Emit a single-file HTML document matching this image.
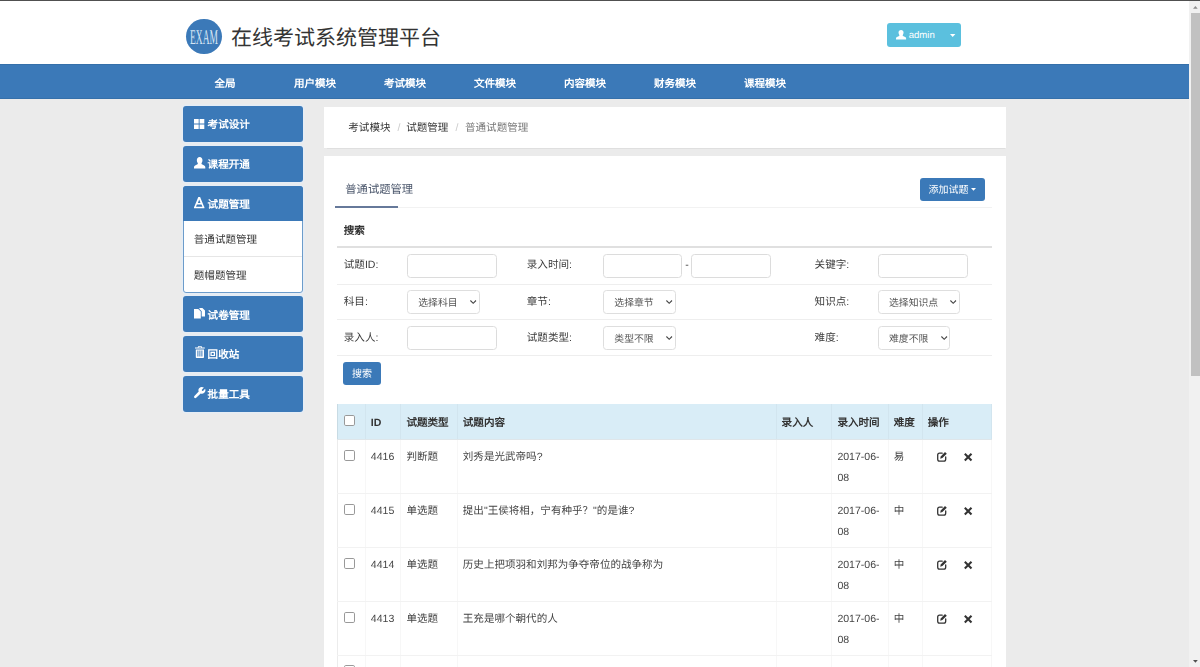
<!DOCTYPE html>
<html lang="zh-CN">
<head>
<meta charset="utf-8">
<title>在线考试系统管理平台</title>
<style>
html,body{margin:0;padding:0}
body{width:1200px;height:667px;overflow:hidden;position:relative;background:#ebebeb;font-family:"Liberation Sans",sans-serif;font-size:10.55px;color:#333;text-rendering:geometricPrecision;filter:blur(.38px)}
.a{position:absolute;white-space:nowrap;box-sizing:border-box}
svg{position:absolute;display:block;overflow:visible}
#hdr{left:-6px;top:-6px;width:1212px;height:70px;background:#fff}
#topline{left:-6px;top:-4px;width:1212px;height:5.3px;background:#505050}
#logo{left:186px;top:18.5px;width:36.3px;height:35.8px;border-radius:50%;background:#3b79b8}
#logo span{position:absolute;left:-12.7px;top:6.9px;width:62px;height:24px;line-height:24px;font-family:"Liberation Serif",serif;font-size:21px;color:#d6e6f4;text-align:center;transform:scaleX(.452);transform-origin:50% 50%;letter-spacing:0}
#title{left:231px;top:18.8px;height:40px;line-height:40px;font-size:21px;color:#333}
#admin{left:887.2px;top:23.1px;width:73.6px;height:23.7px;border-radius:3px;background:#5bc0de;color:#fff;font-size:9.6px}
#admin .t{left:21.5px;top:1px;height:23.7px;line-height:23.7px}
#nav{left:-6px;top:64px;width:1212px;height:34.8px;background:#3b79b8;border-top:1px solid #3570aa;border-bottom:1px solid #3570aa}
.ni{top:65.1px;width:90px;height:35px;line-height:38.2px;text-align:center;color:#fff;font-weight:bold}
.sb{left:183.4px;width:119.2px;height:36px;background:#3b79b8;border-radius:3px;color:#fff;font-weight:bold;box-shadow:0 0 0 1.6px rgba(226,238,251,.6)}
.sb .t{left:24.2px;top:1.2px;height:36px;line-height:36.5px}
#sb3{height:106.6px;background:#fff;border:1px solid #6c9ccb;font-weight:normal;color:#333}
#sb3 .h{left:-1px;top:-1px;width:119.2px;height:35.2px;background:#3b79b8;border-radius:3px 3px 0 0;color:#fff;font-weight:bold}
#sb3 .s{left:9.4px;height:35px;line-height:37.2px;color:#333}
#sb3 .sep{left:0;top:69px;width:117.2px;height:1px;background:#e6e6e6}
.pn{background:#fff;box-shadow:0 .8px .8px rgba(0,0,0,.05)}
#bc{left:323.8px;top:106.7px;width:682.6px;height:41.2px}
#bc .t{top:1.6px;height:41.2px;line-height:41.6px}
#mp{left:323.8px;top:156px;width:682.6px;height:540px}
.lb{height:24px;line-height:24px;color:#3b3b3b}
.in{height:24.2px;border:1px solid #dcdcdc;border-radius:3.5px;background:#fff}
.sl{height:23.6px;border:1px solid #dedede;border-radius:3.5px;background:#fff;color:#555;font-size:9.85px}
.sl .t{left:10.4px;top:1px;height:21.6px;line-height:23.6px}
.hl{height:1px;background:#eee;left:337px;width:655px}
.btn{background:#3b79b8;color:#fff;border-radius:3px}
.th{top:405.9px;height:34.9px;line-height:35.8px;font-weight:bold;color:#333}
.vl{top:404.2px;width:1px;height:270px;background:rgba(0,0,0,.032)}
.td{height:21px;line-height:21px;color:#444}
.cb{left:344.1px;width:11.2px;height:11.2px;border:1px solid #999;border-radius:1.8px;background:#fff}
</style>
</head>
<body>
<div class="a" id="hdr"></div>
<div class="a" id="topline"></div>
<div class="a" id="logo"><span>EXAM</span></div>
<div class="a" id="title">在线考试系统管理平台</div>
<div class="a" id="admin">
  <svg style="left:8.4px;top:6.6px" width="10.1" height="9.5" viewBox="0 0 104 98"><path fill="#fff" d="M52 0c16 0 26 11 26 27 0 9-3 18-8 24-2 3-2 8 2 10l22 10c7 3 10 8 10 15v12H0V86c0-7 3-12 10-15l22-10c4-2 4-7 2-10-5-6-8-15-8-24C26 11 36 0 52 0z"/></svg>
  <span class="a t">admin</span>
  <svg style="left:62.6px;top:11.3px" width="5.4" height="3" viewBox="0 0 54 30"><path fill="#fff" d="M0 0h54L27 30z"/></svg>
</div>

<div class="a" id="nav"></div>
<div class="a ni" style="left:180px">全局</div>
<div class="a ni" style="left:270px">用户模块</div>
<div class="a ni" style="left:360px">考试模块</div>
<div class="a ni" style="left:450px">文件模块</div>
<div class="a ni" style="left:540px">内容模块</div>
<div class="a ni" style="left:630px">财务模块</div>
<div class="a ni" style="left:720px">课程模块</div>

<!-- sidebar -->
<div class="a sb" style="top:106.2px">
  <svg style="left:10.3px;top:12.7px" width="10.3" height="10" viewBox="0 0 103 100"><path fill="#fff" d="M0 0h47v45H0zM56 0h47v45H56zM0 55h47v45H0zM56 55h47v45H56z"/></svg>
  <span class="a t">考试设计</span>
</div>
<div class="a sb" style="top:146.2px">
  <svg style="left:10.3px;top:10.6px" width="11.3" height="11.6" viewBox="0 0 104 98" preserveAspectRatio="none"><path fill="#fff" d="M52 0c16 0 26 11 26 27 0 9-3 18-8 24-2 3-2 8 2 10l22 10c7 3 10 8 10 15v12H0V86c0-7 3-12 10-15l22-10c4-2 4-7 2-10-5-6-8-15-8-24C26 11 36 0 52 0z"/></svg>
  <span class="a t">课程开通</span>
</div>
<div class="a sb" id="sb3" style="top:186px">
  <div class="a h">
    <svg style="left:10.3px;top:11px" width="10.4" height="11.2" viewBox="0 0 104 112"><path fill="#fff" fill-rule="evenodd" d="M43 0h18l40 98H3zM52 24L39 60h26zM29 74l-9 24h64l-9-24zM0 97h104v15H0z"/></svg>
    <span class="a t" style="left:24.2px;top:1.1px;height:35.8px;line-height:36.3px">试题管理</span>
  </div>
  <span class="a s" style="top:35.2px">普通试题管理</span>
  <div class="a sep"></div>
  <span class="a s" style="top:70.6px">题帽题管理</span>
</div>
<div class="a sb" style="top:296.4px">
  <svg style="left:10.4px;top:11.9px" width="11" height="10.6" viewBox="0 0 110 106"><path fill="#fff" d="M0 10h42l26 26v70H0zM54 0h30l26 26v58H77V32L54 9z"/></svg>
  <span class="a t">试卷管理</span>
</div>
<div class="a sb" style="top:336.2px">
  <svg style="left:11.6px;top:10.1px" width="9.8" height="11.9" viewBox="0 0 98 119"><path fill="#fff" fill-rule="evenodd" d="M34 0h30l8 14h26v12H0V14h26zM38 8l-3 6h28l-3-6zM8 34h82v75c0 6-4 10-10 10H18c-6 0-10-4-10-10zM24 46v60h10V46zM44 46v60h10V46zM64 46v60h10V46z"/></svg>
  <span class="a t">回收站</span>
</div>
<div class="a sb" style="top:376.2px;height:35.5px">
  <svg style="left:10.2px;top:10.5px" width="11.1" height="11.1" viewBox="0 0 111 111"><path fill="#fff" d="M78 0c8 0 15 2 21 6L78 27l2 10 10 2 21-21c3 6 4 13 3 20-3 17-19 30-36 29-4 0-8-1-11-2L22 108c-5 5-13 5-18 0s-5-13 0-18l43-45c-2-4-3-9-3-14C44 14 59 0 78 0z"/></svg>
  <span class="a t">批量工具</span>
</div>

<!-- breadcrumb -->
<div class="a pn" id="bc">
  <span class="a t" style="left:24.5px;color:#333">考试模块</span>
  <span class="a t" style="left:73.8px;color:#ccc">/</span>
  <span class="a t" style="left:82.4px;color:#333">试题管理</span>
  <span class="a t" style="left:131.8px;color:#ccc">/</span>
  <span class="a t" style="left:141.2px;color:#777">普通试题管理</span>
</div>

<!-- main panel -->
<div class="a pn" id="mp"></div>
<div class="a" style="left:345.3px;top:177.9px;height:24px;line-height:24px;font-size:11.3px;color:#4a566b">普通试题管理</div>
<div class="a" style="left:334.5px;top:207px;width:657px;height:1px;background:#f2f2f2"></div>
<div class="a" style="left:334.5px;top:206px;width:63.5px;height:2px;background:#66799a"></div>
<div class="a btn" style="left:919.6px;top:178px;width:65.3px;height:22.8px">
  <span class="a" style="left:9px;top:0;height:22.8px;line-height:25px;font-size:10px">添加试题</span>
  <svg style="left:51px;top:10.4px" width="5" height="2.8" viewBox="0 0 54 30"><path fill="#fff" d="M0 0h54L27 30z"/></svg>
</div>

<div class="a" style="left:343.8px;top:219px;height:24px;line-height:24.6px;font-weight:bold;color:#333">搜索</div>
<div class="a hl" style="top:246.3px;height:1.8px;background:#e0e0e0"></div>

<!-- row 1 -->
<span class="a lb" style="left:343.8px;top:253.1px">试题ID:</span>
<div class="a in" style="left:406.8px;top:253.5px;width:90.2px"></div>
<span class="a lb" style="left:526.8px;top:253.1px">录入时间:</span>
<div class="a in" style="left:602.9px;top:253.5px;width:79.4px"></div>
<span class="a lb" style="left:685.2px;top:253.1px">-</span>
<div class="a in" style="left:690.8px;top:253.5px;width:79.8px"></div>
<span class="a lb" style="left:814.6px;top:253.1px">关键字:</span>
<div class="a in" style="left:877.6px;top:253.5px;width:90.2px"></div>
<div class="a hl" style="top:283.6px"></div>

<!-- row 2 -->
<span class="a lb" style="left:343.8px;top:290.2px">科目:</span>
<div class="a sl" style="left:406.8px;top:290.3px;width:72.8px"><span class="a t">选择科目</span><svg style="left:62.5px;top:8.9px" width="6.4" height="4" viewBox="0 0 64 40"><path fill="none" stroke="#444" stroke-width="11" d="M4 5l28 28L60 5"/></svg></div>
<span class="a lb" style="left:526.8px;top:290.2px">章节:</span>
<div class="a sl" style="left:602.9px;top:290.3px;width:72.8px"><span class="a t">选择章节</span><svg style="left:62.5px;top:8.9px" width="6.4" height="4" viewBox="0 0 64 40"><path fill="none" stroke="#444" stroke-width="11" d="M4 5l28 28L60 5"/></svg></div>
<span class="a lb" style="left:814.6px;top:290.2px">知识点:</span>
<div class="a sl" style="left:877.6px;top:290.3px;width:82px"><span class="a t">选择知识点</span><svg style="left:71.8px;top:8.9px" width="6.4" height="4" viewBox="0 0 64 40"><path fill="none" stroke="#444" stroke-width="11" d="M4 5l28 28L60 5"/></svg></div>
<div class="a hl" style="top:319.1px"></div>

<!-- row 3 -->
<span class="a lb" style="left:343.8px;top:326.2px">录入人:</span>
<div class="a in" style="left:406.8px;top:325.8px;width:90.2px"></div>
<span class="a lb" style="left:526.8px;top:326.2px">试题类型:</span>
<div class="a sl" style="left:602.9px;top:326px;width:72.8px"><span class="a t">类型不限</span><svg style="left:62.5px;top:8.9px" width="6.4" height="4" viewBox="0 0 64 40"><path fill="none" stroke="#444" stroke-width="11" d="M4 5l28 28L60 5"/></svg></div>
<span class="a lb" style="left:814.6px;top:326.2px">难度:</span>
<div class="a sl" style="left:877.6px;top:326px;width:72.8px"><span class="a t">难度不限</span><svg style="left:62.5px;top:8.9px" width="6.4" height="4" viewBox="0 0 64 40"><path fill="none" stroke="#444" stroke-width="11" d="M4 5l28 28L60 5"/></svg></div>
<div class="a hl" style="top:355.1px"></div>

<div class="a btn" style="left:343px;top:361.5px;width:38px;height:23.5px"><span class="a" style="left:9px;top:0;height:23.5px;line-height:26.7px;font-size:10px">搜索</span></div>

<!-- table -->
<div class="a" style="left:337px;top:404.2px;width:655px;height:35.3px;background:#d9edf7"></div>
<div class="a vl" style="left:337px;background:rgba(0,0,0,.075)"></div>
<div class="a vl" style="left:364.8px"></div>
<div class="a vl" style="left:400.4px"></div>
<div class="a vl" style="left:456.6px"></div>
<div class="a vl" style="left:776.2px"></div>
<div class="a vl" style="left:831.1px"></div>
<div class="a vl" style="left:887.5px"></div>
<div class="a vl" style="left:921.7px"></div>
<div class="a vl" style="left:991.4px"></div>
<div class="a cb" style="top:414.9px"></div>
<span class="a th" style="left:370.8px">ID</span>
<span class="a th" style="left:406.4px">试题类型</span>
<span class="a th" style="left:462.8px">试题内容</span>
<span class="a th" style="left:781.6px">录入人</span>
<span class="a th" style="left:837.4px">录入时间</span>
<span class="a th" style="left:893.7px">难度</span>
<span class="a th" style="left:927.8px">操作</span>

<!-- rows -->
<div class="a hl" style="top:439.1px;background:#dfe6ea"></div>

<div class="a cb" style="top:450.2px"></div>
<span class="a td" style="left:370.8px;top:446.9px">4416</span>
<span class="a td" style="left:406.4px;top:446.9px">判断题</span>
<span class="a td" style="left:462.8px;top:446.9px">刘秀是光武帝吗?</span>
<span class="a td" style="left:837.4px;top:446.9px">2017-06-</span>
<span class="a td" style="left:837.4px;top:467.9px">08</span>
<span class="a td" style="left:893.7px;top:446.9px">易</span>
<svg style="left:936.8px;top:452.2px" width="10" height="9.8" viewBox="0 0 100 98"><path fill="none" stroke="#333" stroke-width="13" stroke-linecap="round" d="M52 12H26C15 12 7 20 7 31v42c0 11 8 19 19 19h42c11 0 19-8 19-19V50"/><path fill="#333" d="M80 0l18 17-44 44-22 6 5-23z"/></svg>
<svg style="left:964.3px;top:453px" width="8.3" height="8.2" viewBox="0 0 83 82"><path fill="none" stroke="#333" stroke-width="21" d="M8 8l67 66M75 8L8 74"/></svg>
<div class="a hl" style="top:493.3px;background:#f2f2f2"></div>

<div class="a cb" style="top:504.2px"></div>
<span class="a td" style="left:370.8px;top:500.9px">4415</span>
<span class="a td" style="left:406.4px;top:500.9px">单选题</span>
<span class="a td" style="left:462.8px;top:500.9px">提出"王侯将相，宁有种乎？"的是谁?</span>
<span class="a td" style="left:837.4px;top:500.9px">2017-06-</span>
<span class="a td" style="left:837.4px;top:521.9px">08</span>
<span class="a td" style="left:893.7px;top:500.9px">中</span>
<svg style="left:936.8px;top:506.2px" width="10" height="9.8" viewBox="0 0 100 98"><path fill="none" stroke="#333" stroke-width="13" stroke-linecap="round" d="M52 12H26C15 12 7 20 7 31v42c0 11 8 19 19 19h42c11 0 19-8 19-19V50"/><path fill="#333" d="M80 0l18 17-44 44-22 6 5-23z"/></svg>
<svg style="left:964.3px;top:507px" width="8.3" height="8.2" viewBox="0 0 83 82"><path fill="none" stroke="#333" stroke-width="21" d="M8 8l67 66M75 8L8 74"/></svg>
<div class="a hl" style="top:547.3px;background:#f2f2f2"></div>

<div class="a cb" style="top:558.2px"></div>
<span class="a td" style="left:370.8px;top:554.9px">4414</span>
<span class="a td" style="left:406.4px;top:554.9px">单选题</span>
<span class="a td" style="left:462.8px;top:554.9px">历史上把项羽和刘邦为争夺帝位的战争称为</span>
<span class="a td" style="left:837.4px;top:554.9px">2017-06-</span>
<span class="a td" style="left:837.4px;top:575.9px">08</span>
<span class="a td" style="left:893.7px;top:554.9px">中</span>
<svg style="left:936.8px;top:560.2px" width="10" height="9.8" viewBox="0 0 100 98"><path fill="none" stroke="#333" stroke-width="13" stroke-linecap="round" d="M52 12H26C15 12 7 20 7 31v42c0 11 8 19 19 19h42c11 0 19-8 19-19V50"/><path fill="#333" d="M80 0l18 17-44 44-22 6 5-23z"/></svg>
<svg style="left:964.3px;top:561px" width="8.3" height="8.2" viewBox="0 0 83 82"><path fill="none" stroke="#333" stroke-width="21" d="M8 8l67 66M75 8L8 74"/></svg>
<div class="a hl" style="top:601.3px;background:#f2f2f2"></div>

<div class="a cb" style="top:612.2px"></div>
<span class="a td" style="left:370.8px;top:608.9px">4413</span>
<span class="a td" style="left:406.4px;top:608.9px">单选题</span>
<span class="a td" style="left:462.8px;top:608.9px">王充是哪个朝代的人</span>
<span class="a td" style="left:837.4px;top:608.9px">2017-06-</span>
<span class="a td" style="left:837.4px;top:629.9px">08</span>
<span class="a td" style="left:893.7px;top:608.9px">中</span>
<svg style="left:936.8px;top:614.2px" width="10" height="9.8" viewBox="0 0 100 98"><path fill="none" stroke="#333" stroke-width="13" stroke-linecap="round" d="M52 12H26C15 12 7 20 7 31v42c0 11 8 19 19 19h42c11 0 19-8 19-19V50"/><path fill="#333" d="M80 0l18 17-44 44-22 6 5-23z"/></svg>
<svg style="left:964.3px;top:615px" width="8.3" height="8.2" viewBox="0 0 83 82"><path fill="none" stroke="#333" stroke-width="21" d="M8 8l67 66M75 8L8 74"/></svg>
<div class="a hl" style="top:655px;background:#f2f2f2"></div>

<div class="a cb" style="top:665.4px"></div>
<span class="a td" style="left:370.8px;top:662.9px">4412</span>
<span class="a td" style="left:406.4px;top:662.9px">单选题</span>
<span class="a td" style="left:462.8px;top:662.9px">第一次把天文学与历法结合起来的是</span>
<span class="a td" style="left:837.4px;top:662.9px">2017-06-</span>
<span class="a td" style="left:893.7px;top:662.9px">中</span>

<!-- scrollbar -->
<div class="a" style="left:1189px;top:1.3px;width:17px;height:672px;background:#f1f1f1"></div>
<div class="a" style="left:1190.6px;top:12.8px;width:15px;height:363.4px;background:#c1c1c1"></div>
<svg style="left:1193px;top:5.5px" width="4.8" height="2.7" viewBox="0 0 48 28"><path fill="#8d8d8d" d="M0 28h48L24 0z"/></svg>
<svg style="left:1193px;top:660px" width="4.8" height="2.8" viewBox="0 0 48 28"><path fill="#505050" d="M0 0h48L24 28z"/></svg>
</body>
</html>
